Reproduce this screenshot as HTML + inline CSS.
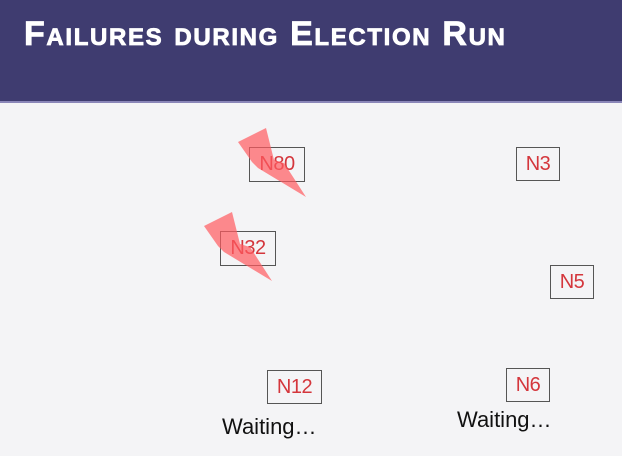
<!DOCTYPE html>
<html><head><style>
body{margin:0;width:622px;height:456px;background:#f4f4f6;position:relative;overflow:hidden;font-family:"Liberation Sans",sans-serif}
.hd{position:absolute;left:0;top:0;width:622px;height:101px;background:#3f3c70;border-bottom:2px solid #8a86b8}
.t{position:absolute;left:24px;top:15px;color:#fff;font-weight:bold;font-size:34px;font-variant:small-caps;white-space:nowrap;letter-spacing:1.65px;-webkit-text-stroke:0.8px #fff}
.b{position:absolute;border:1.5px solid #555;box-sizing:border-box;color:#d4363c;font-size:20px;text-align:center;letter-spacing:-0.5px}
.w{position:absolute;font-size:22px;color:#111}
svg{position:absolute;left:0;top:0}
</style></head><body>
<div class="hd"><div class="t">Failures during Election Run</div></div>
<div class="b" style="left:249px;top:147px;width:56px;height:35px;line-height:33px">N80</div>
<div class="b" style="left:516px;top:147px;width:44px;height:34px;line-height:32px">N3</div>
<div class="b" style="left:220px;top:231px;width:56px;height:35px;line-height:33px">N32</div>
<div class="b" style="left:550px;top:265px;width:44px;height:34px;line-height:32px">N5</div>
<div class="b" style="left:267px;top:370px;width:55px;height:34px;line-height:32px">N12</div>
<div class="b" style="left:506px;top:368px;width:44px;height:34px;line-height:32px">N6</div>
<svg width="622" height="456">
<polygon points="238,142 266,128 274,160 284,163 306,197 258,168 252,162" fill="#ff5a5f" opacity="0.7"/>
<polygon points="204,226 232,212 240,244 250,247 272,281 224,252 218,246" fill="#ff5a5f" opacity="0.7"/>
</svg>
<div class="w" style="left:222px;top:414px">Waiting…</div>
<div class="w" style="left:457px;top:407px">Waiting…</div>
</body></html>
